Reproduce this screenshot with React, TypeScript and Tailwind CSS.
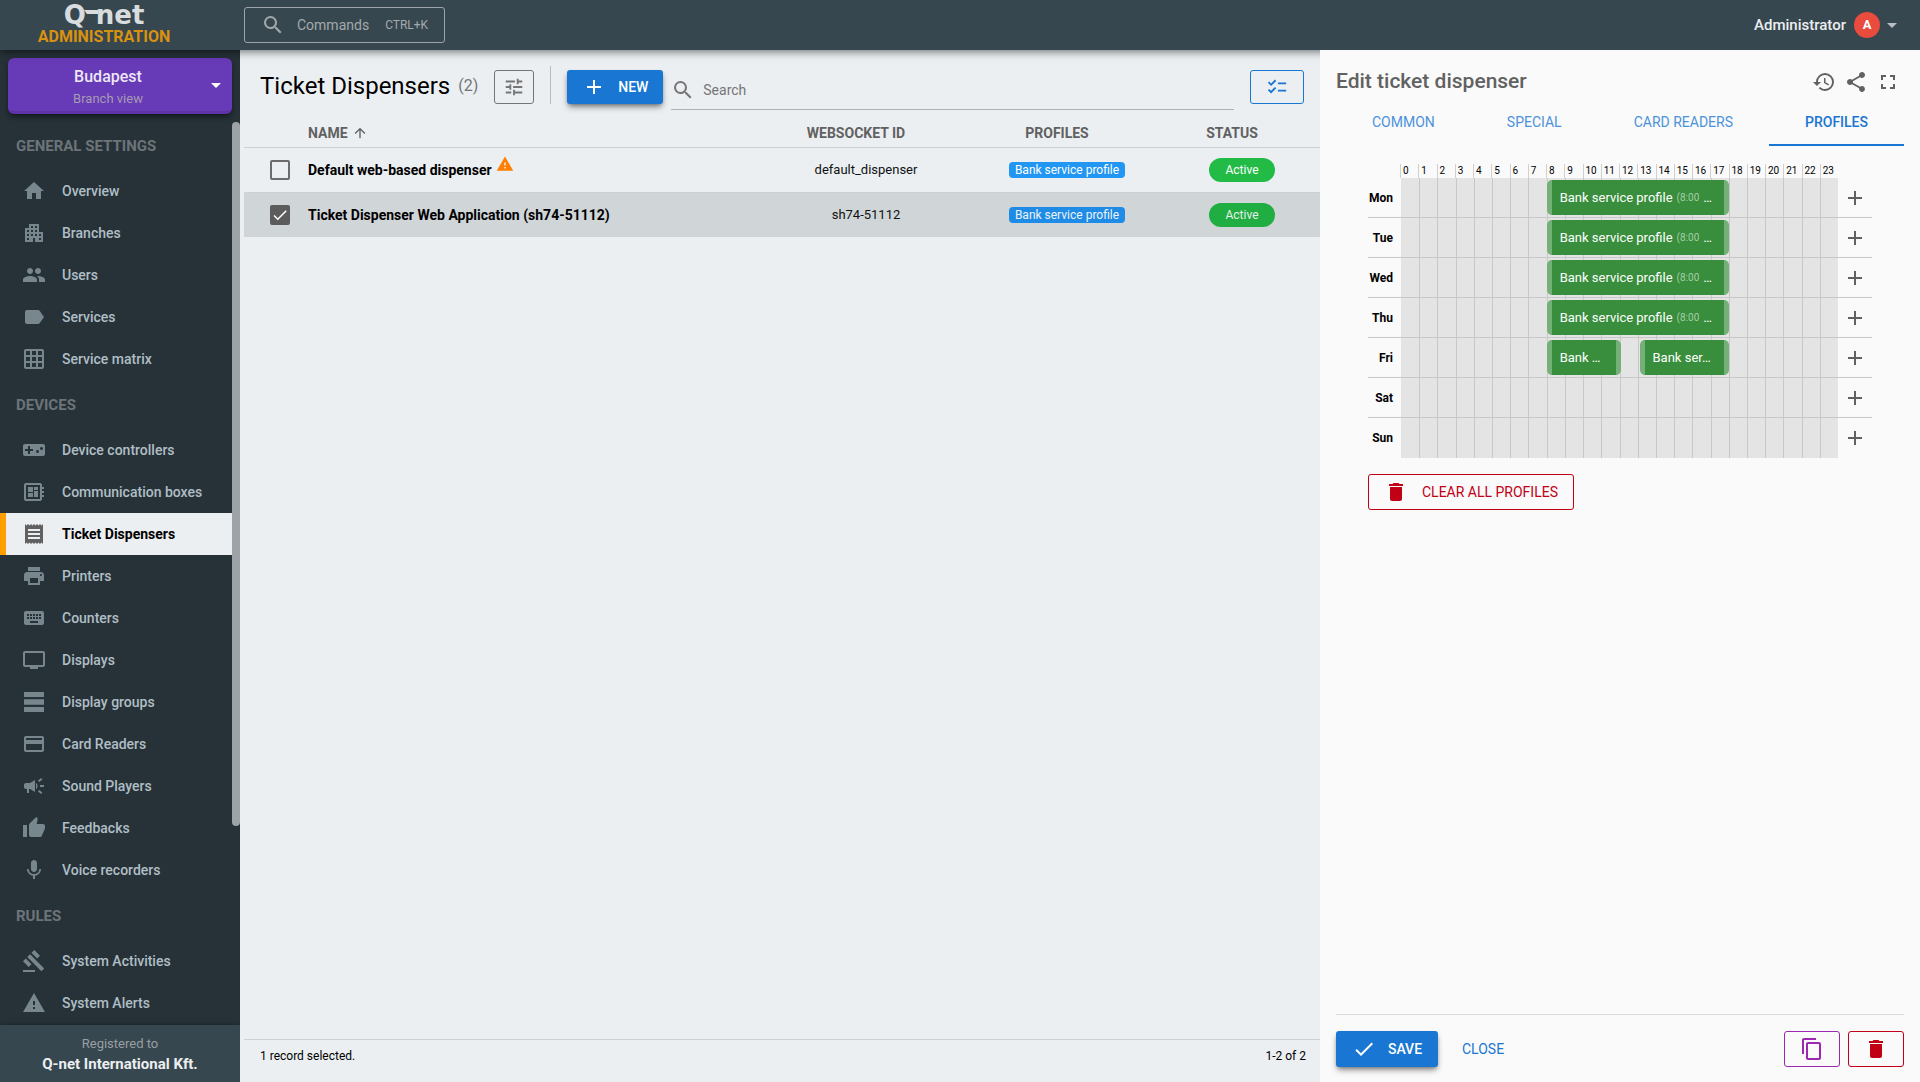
import type { ReactNode } from 'react';
import type { IconType } from 'react-icons';
import {
  MdAdd,
  MdApartment,
  MdArrowDropDown,
  MdArrowUpward,
  MdCampaign,
  MdCheck,
  MdChecklist,
  MdContentCopy,
  MdCreditCard,
  MdDelete,
  MdDeveloperBoard,
  MdFullscreen,
  MdGavel,
  MdGridOn,
  MdHistory,
  MdHome,
  MdKeyboard,
  MdLabel,
  MdMic,
  MdPeople,
  MdPrint,
  MdReceipt,
  MdSearch,
  MdShare,
  MdThumbUp,
  MdTune,
  MdTv,
  MdVideogameAsset,
  MdWarning,
} from 'react-icons/md';

function GroupsIcon() {
  return (
    <svg viewBox="0 0 24 24" className="size-6" fill="currentColor">
      <path d="M2 2h20v5H2zM2 9.3h20v5.4H2zM2 17h20v5H2z" />
    </svg>
  );
}

type NavItem = { label: string; icon: IconType | typeof GroupsIcon; active?: boolean };

const sections: { title: string; items: NavItem[] }[] = [
  {
    title: 'GENERAL SETTINGS',
    items: [
      { label: 'Overview', icon: MdHome },
      { label: 'Branches', icon: MdApartment },
      { label: 'Users', icon: MdPeople },
      { label: 'Services', icon: MdLabel },
      { label: 'Service matrix', icon: MdGridOn },
    ],
  },
  {
    title: 'DEVICES',
    items: [
      { label: 'Device controllers', icon: MdVideogameAsset },
      { label: 'Communication boxes', icon: MdDeveloperBoard },
      { label: 'Ticket Dispensers', icon: MdReceipt, active: true },
      { label: 'Printers', icon: MdPrint },
      { label: 'Counters', icon: MdKeyboard },
      { label: 'Displays', icon: MdTv },
      { label: 'Display groups', icon: GroupsIcon },
      { label: 'Card Readers', icon: MdCreditCard },
      { label: 'Sound Players', icon: MdCampaign },
      { label: 'Feedbacks', icon: MdThumbUp },
      { label: 'Voice recorders', icon: MdMic },
    ],
  },
  {
    title: 'RULES',
    items: [
      { label: 'System Activities', icon: MdGavel },
      { label: 'System Alerts', icon: MdWarning },
    ],
  },
];

const dispensers = [
  { name: 'Default web-based dispenser', socket: 'default_dispenser', warning: true, selected: false },
  { name: 'Ticket Dispenser Web Application (sh74-51112)', socket: 'sh74-51112', warning: false, selected: true },
];

const hours = Array.from({ length: 24 }, (_, i) => i);

type Block = { from: number; to: number; label: string; time?: string };

const fullDay: Block[] = [{ from: 8, to: 18, label: 'Bank service profile', time: '(8:00' }];

const days: { name: string; blocks: Block[] }[] = [
  { name: 'Mon', blocks: fullDay },
  { name: 'Tue', blocks: fullDay },
  { name: 'Wed', blocks: fullDay },
  { name: 'Thu', blocks: fullDay },
  {
    name: 'Fri',
    blocks: [
      { from: 8, to: 12.1, label: 'Bank …' },
      { from: 13.1, to: 18, label: 'Bank ser…' },
    ],
  },
  { name: 'Sat', blocks: [] },
  { name: 'Sun', blocks: [] },
];

function Header() {
  return (
    <header className="z-20 flex h-[50px] shrink-0 items-center bg-[#37474f] shadow-[0_2px_8px_rgba(0,0,0,0.5)]">
      <div className="flex w-60 flex-col items-center pr-8">
        <div className="flex items-center font-['DejaVu_Sans',sans-serif] text-[26px]/6 font-bold text-[#d8dcde]">
          Q
          <svg viewBox="0 0 14 24" className="-mx-0.5 h-6 w-3.5" fill="currentColor">
            <path d="M0 7h14v4H3z" />
          </svg>
          net
        </div>
        <span className="text-base/5 font-bold text-[#d9920f]">ADMINISTRATION</span>
      </div>
      <button className="ml-1 flex h-9 items-center rounded-[3px] border border-[#9ea5a9] px-4 text-[#a3a9ac]">
        <MdSearch className="size-6" />
        <span className="ml-3 text-sm">Commands</span>
        <span className="ml-4 text-xs">CTRL+K</span>
      </button>
      <button className="mr-4 ml-auto flex items-center text-[15px] font-medium text-[#eceff1]">
        Administrator
        <span className="ml-2 flex size-[26px] items-center justify-center rounded-full bg-[#e94b3c] text-[13px] font-bold text-white">
          A
        </span>
        <MdArrowDropDown className="size-6 text-[#b8bec1]" />
      </button>
    </header>
  );
}

function Sidebar() {
  return (
    <aside className="flex w-60 shrink-0 flex-col bg-[#263238]">
      <button className="m-2 flex h-14 shrink-0 items-center rounded-md border-b-[3px] border-[#5e33a6] bg-[#673ab7] pr-1 shadow-md shadow-black/40">
        <span className="flex flex-1 flex-col items-center pt-1 pl-1">
          <span className="text-base/6 font-medium text-[#ece7f5]">Budapest</span>
          <span className="text-[13px]/5 text-[#a69bb5]">Branch view</span>
        </span>
        <MdArrowDropDown className="size-6 text-white" />
      </button>
      <div className="flex min-h-0 flex-1">
        <nav className="flex min-w-0 flex-1 flex-col gap-px overflow-hidden">
          {sections.map((section) => (
            <section key={section.title}>
              <h2 className="flex h-12 items-center pl-4 text-[15px] font-bold text-[#6c7479]">{section.title}</h2>
              {section.items.map(({ label, icon: Icon, active }) => (
                <a
                  key={label}
                  href="#"
                  className={
                    active
                      ? 'flex h-[42px] items-center border-l-[6px] border-[#ffa000] bg-[#eceff1] pl-4 text-sm font-bold text-black'
                      : 'flex h-[42px] items-center pl-[22px] text-sm font-medium text-[#b0bec5]'
                  }
                >
                  <span className={active ? 'text-[#616161]' : 'text-[#78868e]'}>
                    <Icon className="size-6" />
                  </span>
                  <span className="ml-4">{label}</span>
                </a>
              ))}
            </section>
          ))}
        </nav>
        <div className="w-2 shrink-0">
          <div className="h-[78%] rounded-full bg-[#9ea3a7]" />
        </div>
      </div>
      <div className="flex h-[57px] shrink-0 flex-col items-center justify-center bg-[#37474f] shadow-[0_-1px_4px_rgba(0,0,0,0.3)]">
        <span className="text-[13px]/5 text-[#979fa3]">Registered to</span>
        <span className="text-[15px]/5 font-bold text-[#eceff1]">Q-net International Kft.</span>
      </div>
    </aside>
  );
}

function HeadCell({ children }: { children: ReactNode }) {
  return <th className="pr-5 font-bold">{children}</th>;
}

function DispenserList() {
  return (
    <main className="flex min-w-0 flex-1 flex-col bg-[#ebeff2] pl-1">
      <div className="flex h-[69px] shrink-0 items-start pt-4 pr-4 pl-4">
        <h1 className="flex h-10 items-center gap-2 text-2xl text-black">
          Ticket Dispensers <span className="text-base text-[#757575]">(2)</span>
        </h1>
        <button
          aria-label="Filters"
          className="mt-1 ml-4 flex h-[34px] w-10 items-center justify-center rounded-[3px] border border-[#757575] text-[#757575]"
        >
          <MdTune className="size-[22px]" />
        </button>
        <div className="ml-4 h-[38px] w-px bg-[#b9bcbf]" />
        <button className="mt-1 ml-4 flex h-[34px] w-24 items-center justify-center gap-3 rounded-[3px] bg-[#1976d2] text-sm font-medium text-white shadow-md shadow-black/40">
          <MdAdd className="size-6" />
          NEW
        </button>
        <label className="ml-2 flex h-11 flex-1 items-center border-b border-[#aeb3b6] pt-1 text-[#757575]">
          <MdSearch className="size-6" />
          <input
            type="search"
            aria-label="Search"
            placeholder="Search"
            className="ml-2 min-w-0 flex-1 bg-transparent text-sm outline-none placeholder:text-[#757575]"
          />
        </label>
        <button
          aria-label="Select items"
          className="mt-1 ml-4 flex h-[34px] w-[54px] items-center justify-center rounded-[3px] border border-[#1976d2] text-[#1976d2]"
        >
          <MdChecklist className="size-[22px]" />
        </button>
      </div>

      <table className="w-full table-fixed border-collapse text-[13px]">
        <colgroup>
          <col className="w-16" />
          <col />
          <col className="w-52" />
          <col className="w-[194px]" />
          <col className="w-[156px]" />
        </colgroup>
        <thead>
          <tr className="h-7 border-b border-[#ccd1d4] text-sm text-[#616161]">
            <th />
            <th className="text-left font-bold">
              <span className="flex items-center gap-1">
                NAME <MdArrowUpward className="size-4" />
              </span>
            </th>
            <HeadCell>WEBSOCKET ID</HeadCell>
            <HeadCell>PROFILES</HeadCell>
            <HeadCell>STATUS</HeadCell>
          </tr>
        </thead>
        <tbody>
          {dispensers.map((row) => (
            <tr
              key={row.socket}
              className={row.selected ? 'h-[45px] bg-[#d0d5d8]' : 'h-[45px] border-b border-[#ccd1d4]'}
            >
              <td className="pl-[26px]">
                <label className="relative flex size-5 items-center justify-center">
                  <input
                    type="checkbox"
                    aria-label={row.name}
                    defaultChecked={row.selected}
                    className="peer size-5 appearance-none rounded-[2px] border-2 border-[#6b6b6b] checked:border-[#5c5c5c] checked:bg-[#5c5c5c]"
                  />
                  <MdCheck className="pointer-events-none absolute hidden size-[18px] text-white peer-checked:block" />
                </label>
              </td>
              <td className="text-sm font-bold text-black">
                <span className="flex items-center gap-1">
                  {row.name}
                  {row.warning && <MdWarning className="mb-3 size-[18px] text-[#ff7f00]" />}
                </span>
              </td>
              <td className="text-center text-[#111]">{row.socket}</td>
              <td className="text-center">
                <span
                  className={
                    row.selected
                      ? 'inline-block rounded-sm bg-[#1e8be6] px-1.5 text-xs/4 text-[#eef3f7]'
                      : 'inline-block rounded-sm bg-[#2196f3] px-1.5 text-xs/4 text-white'
                  }
                >
                  Bank service profile
                </span>
              </td>
              <td className="text-center">
                <span
                  className={
                    row.selected
                      ? 'inline-block rounded-full bg-[#20ae42] px-4 text-xs/6 text-[#e6f0ea]'
                      : 'inline-block rounded-full bg-[#22bb46] px-4 text-xs/6 text-white'
                  }
                >
                  Active
                </span>
              </td>
            </tr>
          ))}
        </tbody>
      </table>

      <footer className="mt-auto flex h-[43px] shrink-0 items-start justify-between border-t border-[#ccd1d4] pt-2 pr-3.5 pl-4 text-xs/4 text-black">
        <span>1 record selected.</span>
        <span>1-2 of 2</span>
      </footer>
    </main>
  );
}

function Schedule() {
  return (
    <div className="ml-8 w-[504px] text-black">
      <div className="flex pr-[34px] pl-8">
        <div className="grid h-3.5 flex-1 grid-cols-24">
          {hours.map((h) => (
            <span key={h} className="border-l border-[#d0d0d0] pl-0.5 text-[10px]/3.5">
              {h}
            </span>
          ))}
        </div>
      </div>
      {days.map((day) => (
        <div key={day.name} className="flex h-10 border-b border-[#c8c8c8] last:border-b-0">
          <span className="flex w-[33px] items-center justify-end pr-2 text-xs font-bold">{day.name}</span>
          <div className="relative grid flex-1 grid-cols-24 bg-[#e4e4e4]">
            {hours.map((h) => (
              <span key={h} className="border-l border-[#c8c8c8] first:border-l-0" />
            ))}
            {day.blocks.map((block) => (
              <div
                key={block.from}
                className="absolute top-0.5 flex h-[35px] items-center gap-1 rounded-[5px] border-x-[5px] border-[#74b078] bg-[#388e3c] pl-2 text-[13px] whitespace-nowrap text-white"
                style={{
                  left: `${(block.from / 24) * 100}%`,
                  width: `${((block.to - block.from) / 24) * 100}%`,
                }}
              >
                {block.label}
                {block.time && (
                  <>
                    <span className="text-[10px] text-[#a5cda7]">{block.time}</span>…
                  </>
                )}
              </div>
            ))}
          </div>
          <button aria-label={`Add profile on ${day.name}`} className="flex w-[34px] items-center justify-center text-[#616161]">
            <MdAdd className="size-6" />
          </button>
        </div>
      ))}
    </div>
  );
}

function EditPanel() {
  return (
    <aside className="z-30 flex w-[600px] shrink-0 flex-col bg-[#fafafa] px-4">
      <div className="flex h-16 shrink-0 items-center gap-2 text-[#616161]">
        <h2 className="flex-1 text-[21px] font-medium">Edit ticket dispenser</h2>
        <button aria-label="History">
          <MdHistory className="size-6" />
        </button>
        <button aria-label="Share">
          <MdShare className="size-6" />
        </button>
        <button aria-label="Full screen" className="mr-1">
          <MdFullscreen className="size-6" />
        </button>
      </div>

      <div role="tablist" className="-mt-4 flex h-12 shrink-0 text-sm text-[#4c92da]">
        {['COMMON', 'SPECIAL', 'CARD READERS'].map((tab) => (
          <button key={tab} role="tab" className="flex-auto border-b-2 border-transparent pt-0.5">
            {tab}
          </button>
        ))}
        <button
          role="tab"
          aria-selected="true"
          className="flex-auto border-b-2 border-[#1976d2] pt-0.5 font-medium text-[#1976d2]"
        >
          PROFILES
        </button>
      </div>

      <div className="flex flex-1 flex-col items-start gap-4 pt-[18px]">
        <Schedule />
        <button className="ml-8 flex h-9 w-[206px] items-center justify-center gap-3.5 rounded-[3px] border border-[#c10015] text-sm text-[#c10015]">
          <MdDelete className="size-6" />
          CLEAR ALL PROFILES
        </button>
      </div>

      <div className="flex h-[68px] shrink-0 items-center gap-2 border-t border-[#dcdcdc] text-sm">
        <button className="flex h-9 w-[102px] items-center justify-center gap-3 rounded-[3px] bg-[#1976d2] font-medium text-white shadow-md shadow-black/40">
          <MdCheck className="size-6" />
          SAVE
        </button>
        <button className="mr-auto px-4 text-[#1976d2]">CLOSE</button>
        <button
          aria-label="Duplicate"
          className="flex h-9 w-14 items-center justify-center rounded-[3px] border border-[#9c27b0] text-[#9c27b0]"
        >
          <MdContentCopy className="size-6" />
        </button>
        <button
          aria-label="Delete"
          className="flex h-9 w-14 items-center justify-center rounded-[3px] border border-[#c10015] text-[#c10015]"
        >
          <MdDelete className="size-6" />
        </button>
      </div>
    </aside>
  );
}

export default function App() {
  return (
    <div className="flex h-screen flex-col overflow-hidden font-['Roboto',sans-serif]">
      <Header />
      <div className="flex min-h-0 flex-1">
        <Sidebar />
        <DispenserList />
        <EditPanel />
      </div>
    </div>
  );
}
